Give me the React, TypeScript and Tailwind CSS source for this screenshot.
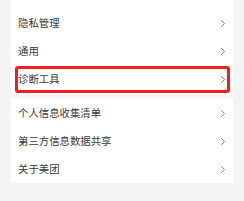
import React from 'react';

const Chevron = () => (
  <svg width="6" height="9" viewBox="0 0 6 9" className="shrink-0">
    <path d="M1.2 1.2l3.3 3.3L1.2 7.8" fill="none" stroke="#777" strokeWidth="0.9" />
  </svg>
);

const Row = ({ label, boxed = false }: { label: string; boxed?: boolean }) => (
  <div className="h-[28px] flex items-center justify-between pl-[7px] pr-[7px] relative">
    <span className="text-[10.4px] leading-none text-[#3a3a3a]">{label}</span>
    <Chevron />
    {boxed && (
      <div className="absolute left-[4px] right-[3px] top-[1px] bottom-0 border-[3px] border-[#f51c1c] rounded-[3px]" />
    )}
  </div>
);

export default function App() {
  return (
    <div
      className="w-[244px] h-[201px] bg-[#f4f4f4] px-[11px] overflow-hidden"
      style={{ fontFamily: '"Noto Sans CJK SC", "Noto Sans", sans-serif' }}
    >
      <div className="bg-white pt-[9px] pb-[2px]">
        <Row label="隐私管理" />
        <Row label="通用" />
        <Row label="诊断工具" boxed />
      </div>
      <div className="bg-white mt-[4px]">
        <Row label="个人信息收集清单" />
        <Row label="第三方信息数据共享" />
        <Row label="关于美团" />
      </div>
    </div>
  );
}
